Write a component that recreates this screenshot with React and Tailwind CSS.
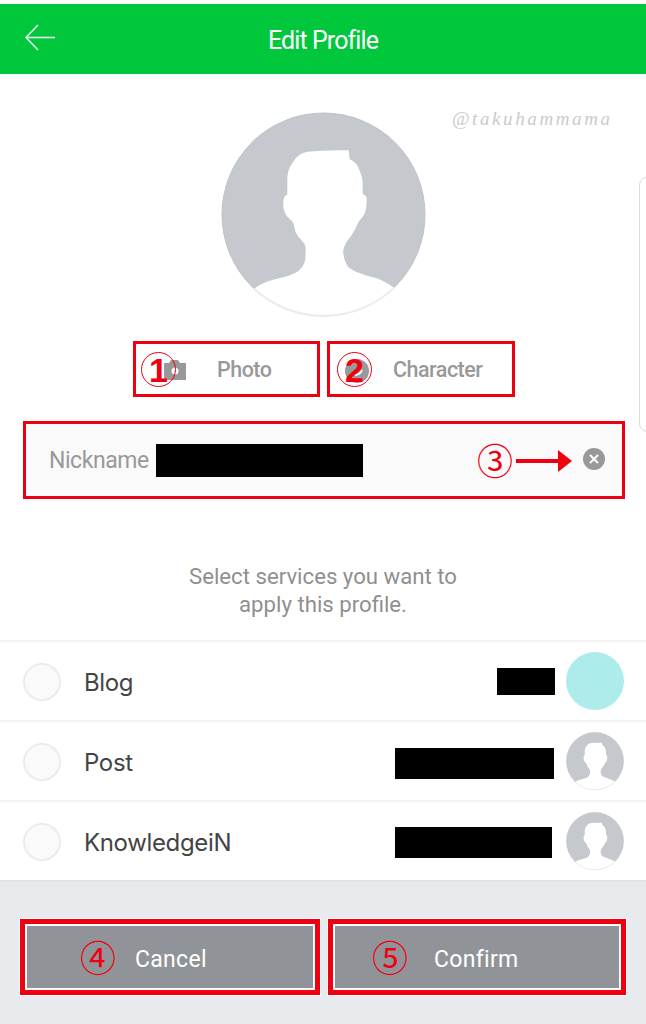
const SILHOUETTE =
  "M92 39 C105 38 116 38 127 38 L128 47 C132 49 135 51 136 54 C139 60 141 66 141 71 L141 82 C144 82 145 84 145 88 C145 94 144 98 143 101 C141 105 138 107 136 111 C135 114 134 116 132 119 C130 124 126 127 124 131 C122 135 121 139 122 142 C123 149 125 153 129 156 C135 160 143 162 149 164 C158 166 166 170 172 175 A102 102 0 0 1 33 176 C39 171 47 168 56 166 C64 164 71 162 76 159 C81 155 84 150 84 144 C84 139 85 135 83 131 C80 127 76 124 74 119 C73 115 73 112 71 109 C68 106 65 104 64 101 C62 97 62 94 62 91 C62 86 63 83 66 82 L66 67 C66 60 68 55 71 51 C73 47 76 44 79 42 C83 40 87 39 92 39 Z";

const Avatar = ({ className }) => (
  <svg viewBox="0 0 204 204" className={className}>
    <circle cx="102" cy="102" r="101" fill="#c5c8cd" stroke="#bfc2c7" strokeWidth="1" />
    <path d={SILHOUETTE} fill="#ffffff" />
    <path d="M33 176 A102 102 0 0 0 172 175" fill="none" stroke="#ececec" strokeWidth="2" />
  </svg>
);

const Marker = ({ children, className }) => (
  <span
    className={`absolute text-[#ee0011] leading-none ${className}`}
    style={{ fontFamily: '"Noto Sans CJK JP", sans-serif' }}
  >
    {children}
  </span>
);

// thin ring with a heavy digit, the glyphs 1 and 2 in the picture are drawn thicker
const RingMarker = ({ children, className }) => (
  <span
    className={`absolute w-[35px] h-[35px] rounded-full border border-[#ee0011] flex items-center justify-center text-[#ee0011] text-[34px] font-bold leading-none font-['Liberation_Sans',sans-serif] ${className}`}
  >
    {children}
  </span>
);

const services = [
  { name: "Blog", bar: "w-[58px] h-[27px] mr-[11px]", teal: true },
  { name: "Post", bar: "w-[159px] h-[31px] mr-[12px] mt-[4px]" },
  { name: "KnowledgeiN", bar: "w-[157px] h-[31px] mr-[14px] mt-[2px]" },
];

export default function App() {
  return (
    <div className="relative w-[646px] h-[1024px] overflow-hidden bg-white flex flex-col font-['Roboto',sans-serif]">
      {/* Header */}
      <div className="mt-1 h-[70px] shrink-0 bg-[#00c73c] relative flex items-center justify-center">
        <svg viewBox="0 0 32 28" className="absolute left-[24px] top-[20px] w-[32px] h-[28px]" fill="none" stroke="#e8fbee" strokeWidth="1.6">
          <path d="M31 13.5 H2" />
          <path d="M14 1 L2 13.5 L14 26" />
        </svg>
        <span className="pt-[4px] text-white text-[25px] tracking-[-0.9px]">Edit Profile</span>
      </div>

      {/* Watermark and side handle */}
      <span className="absolute left-[452px] top-[105px] text-[#c9cbce] text-[19px] italic tracking-[2.6px] font-['Liberation_Serif',serif]">
        @takuhammama
      </span>
      <div className="absolute left-[639px] top-[177px] w-[10px] h-[255px] border border-[#dcdcdc] rounded-l-lg" />

      {/* Avatar */}
      <div className="pt-[38px] flex justify-center shrink-0">
        <Avatar className="w-[205px] h-[205px]" />
      </div>

      {/* Photo / Character */}
      <div className="mt-[24px] ml-[133px] flex gap-[7px] shrink-0">
        <div className="relative w-[187px] h-[56px] border-[3px] border-[#ee0011] flex items-center">
          <svg viewBox="0 0 22 20" className="absolute left-[28px] top-[16px] w-[22px] h-[20px]">
            <path d="M0 3 H5 L7 0 H14 L16 3 H22 V20 H0 Z" fill="#999999" />
            <circle cx="11" cy="11" r="3.5" fill="#ffffff" />
          </svg>
          <span className="ml-[81px] pt-[2px] text-[#999999] text-[21.5px] font-medium tracking-[-0.5px]">Photo</span>
          <RingMarker className="left-[5px] top-[8px]">1</RingMarker>
        </div>
        <div className="relative w-[188px] h-[56px] border-[3px] border-[#ee0011] flex items-center">
          <svg viewBox="0 0 24 24" className="absolute left-[15px] top-[15px] w-[24px] h-[24px]">
            <circle cx="12" cy="12" r="12" fill="#999999" />
            <path d="M10 16 Q15 16 17 11" fill="none" stroke="#ffffff" strokeWidth="2" />
          </svg>
          <span className="ml-[63px] pt-[2px] text-[#999999] text-[21.5px] font-medium tracking-[-0.5px]">Character</span>
          <RingMarker className="left-[7px] top-[8px]">2</RingMarker>
        </div>
      </div>

      {/* Nickname */}
      <div className="relative mt-[24px] ml-[23px] w-[602px] h-[78px] shrink-0 border-[3px] border-[#ee0011] bg-[#fafafa] flex items-center pl-[23px]">
        <span className="pt-[3px] text-[#999999] text-[23px] tracking-[-0.45px]">Nickname</span>
        <div className="ml-[7px] w-[207px] h-[33px] bg-black" />
        <Marker className="left-[451px] top-[17px] text-[36px]">③</Marker>
        <svg viewBox="0 0 56 22" className="absolute left-[490px] top-[26px] w-[56px] h-[22px]">
          <path d="M0 9 H42 V13 H0 Z" fill="#ee0011" />
          <path d="M42 0 L56 11 L42 22 Z" fill="#ee0011" />
        </svg>
        <svg viewBox="0 0 22 22" className="absolute left-[557px] top-[24px] w-[22px] h-[22px]">
          <circle cx="11" cy="11" r="11" fill="#999999" />
          <path d="M7 7 L15 15 M15 7 L7 15" stroke="#ffffff" strokeWidth="2" />
        </svg>
      </div>

      {/* Hint */}
      <p className="mt-[63px] text-center text-[#8f8f8f] text-[22.2px] leading-[28px] shrink-0">
        Select services you want to
        <br />
        apply this profile.
      </p>

      {/* Services */}
      <div className="mt-[22px] shrink-0">
        {services.map((s) => (
          <div
            key={s.name}
            className="h-[80px] border-t-2 border-[#f3f3f3] flex items-center pl-[23px] pr-[22px]"
          >
            <div className="mt-[2px] w-[38px] h-[38px] rounded-full bg-[#fafafa] border-2 border-[#ececec]" />
            <span className="ml-[23px] pt-[4px] text-[#444444] text-[24px] font-['Inter',sans-serif] tracking-[-0.35px]">{s.name}</span>
            <div className={`ml-auto bg-black ${s.bar}`} />
            {s.teal ? (
              <div className="w-[58px] h-[58px] rounded-full bg-[#aeecec]" />
            ) : (
              <Avatar className="w-[58px] h-[58px]" />
            )}
          </div>
        ))}
      </div>

      {/* Bottom actions */}
      <div className="flex-1 bg-[#e8eaed] border-t-2 border-[#e1e3e6] pt-[37px] pl-[20px] flex gap-[8px]">
        <div className="relative w-[300px] h-[76px] border-[5px] border-[#ee0011] bg-[#909498] outline outline-white flex items-center">
          <div className="absolute inset-0 border-2 border-white" />
          <span className="ml-[110px] pt-[7px] text-white text-[23px] tracking-[0.3px]">Cancel</span>
          <Marker className="left-[55px] top-[14px] text-[36px]">④</Marker>
        </div>
        <div className="relative w-[298px] h-[76px] border-[5px] border-[#ee0011] bg-[#909498] outline outline-white flex items-center">
          <div className="absolute inset-0 border-2 border-white" />
          <span className="ml-[101px] pt-[7px] text-white text-[23px] tracking-[0.3px]">Confirm</span>
          <Marker className="left-[39px] top-[14px] text-[36px]">⑤</Marker>
        </div>
      </div>
    </div>
  );
}
